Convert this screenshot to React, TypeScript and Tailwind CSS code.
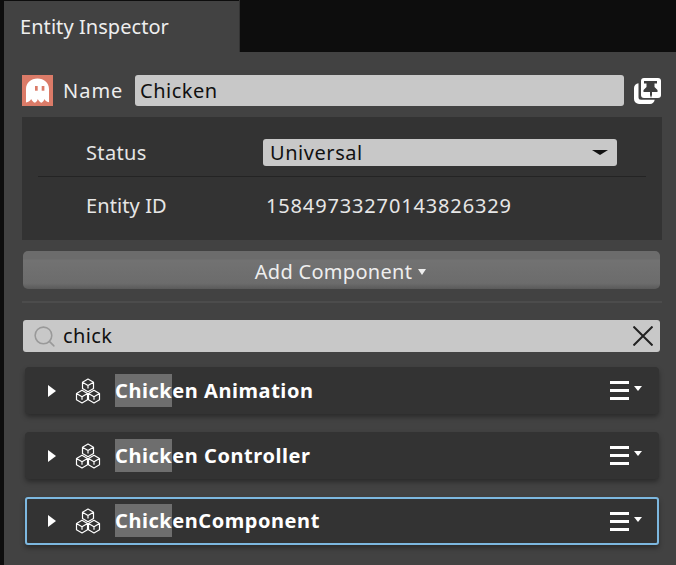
import { Search } from "lucide-react";

const font = { fontFamily: '"Noto Sans", sans-serif' };

function GhostIcon() {
  return (
    <div className="flex h-[31px] w-[31px] shrink-0 bg-[#db7b68]">
      <svg width="31" height="31" viewBox="0 0 31 31">
        <path
          d="M15.500 3.500C9 3.500 4 8 4 14v13.500c2.500-.5 4.200-1.700 5.200-3.400.8 1.800 2 3.300 3.800 3.600 1.400-.6 2.300-2 2.800-3.600.8 1.800 2 3.300 3.700 3.600 1.500-.6 2.400-2 2.900-3.600.6 1.500 2 2.900 4.600 3.100V14c0-6-5-10.500-11.500-10.500z"
          fill="#ffffff"
        />
        <rect x="13" y="11" width="2.700" height="4.700" fill="#db7b68" />
        <rect x="19.700" y="11" width="2.700" height="4.700" fill="#db7b68" />
      </svg>
    </div>
  );
}

function PinIcon() {
  return (
    <svg width="27" height="27" viewBox="0 0 27 27" className="shrink-0">
      <path
        d="M4.500 5.300C2 5.800 0 7.300 0 10v11a5 5 0 0 0 5 5h11c2.600 0 4.200-1.900 4.700-4.300H7a2.500 2.500 0 0 1-2.500-2.500z"
        fill="#ffffff"
      />
      <rect x="7" y="0" width="20" height="20" rx="3" fill="#ffffff" />
      <path d="M10 3h13v2.500h-2.500v3.500l3 3v2H18v3l-1 3-1-3v-3H9.500v-2l3-3V5.500H10z" fill="#3f3f3f" />
    </svg>
  );
}

function CubesIcon() {
  return (
    <svg width="26" height="26" viewBox="0 0 26 26" fill="none" stroke="#ffffff" strokeWidth="1.200" strokeLinejoin="round" className="shrink-0">
      <path d="M13 1l5.500 3.200v6.300L13 13.700l-5.500-3.200V4.200zM7.500 4.200L13 7.400l5.500-3.200M13 7.400v3" />
      <path d="M7 12.300l5.500 3.200v6.300L7 25l-5.500-3.200v-6.300zM1.500 15.500L7 18.700l5.500-3.200M7 18.700v3" />
      <path d="M19 12.300l5.500 3.200v6.300L19 25l-5.500-3.200v-6.300zM13.500 15.500l5.500 3.200 5.500-3.200M19 18.700v3" />
    </svg>
  );
}

function ComponentRow({ rest, selected }: { rest: string; selected?: boolean }) {
  return (
    <div
      className={
        selected
          ? "flex h-[48px] items-center rounded-[3px] border-2 border-[#7db8e0] bg-[#333333] pl-[21px] pr-[15px] shadow-[0_3px_5px_rgba(0,0,0,0.35)]"
          : "flex h-[47px] items-center rounded-[4px] bg-[#333333] pl-[23px] pr-[17px] shadow-[0_3px_5px_rgba(0,0,0,0.35)]"
      }
    >
      <span className="h-0 w-0 border-y-[6px] border-l-[8px] border-y-transparent border-l-white" />
      <span className="ml-[19px] mr-[14px]">
        <CubesIcon />
      </span>
      <span className="text-[20px] leading-none font-bold tracking-[0.55px] text-white">
        <span className="bg-[#6e6e6e] py-[3px]">Chick</span>
        {rest}
      </span>
      <div className="ml-auto flex items-start">
        <div className="flex w-[19px] flex-col gap-[5px]">
          <div className="h-[3px] bg-white" />
          <div className="h-[3px] bg-white" />
          <div className="h-[3px] bg-white" />
        </div>
        <span className="mt-[5px] ml-[5px] h-0 w-0 border-x-[4px] border-t-[5px] border-x-transparent border-t-white" />
      </div>
    </div>
  );
}

export default function App() {
  return (
    <div style={font} className="flex h-[565px] w-[676px] overflow-hidden bg-[#0d0d0d]">
      <div className="ml-[4px] flex w-[672px] flex-col">
        <div className="flex h-[52px] shrink-0">
          <div className="mt-[1px] flex w-[235px] items-center bg-[#424242] pl-[16px] text-[20px] tracking-[0.06px] text-[#eeeeee]">
            Entity Inspector
          </div>
          <div className="w-[1px] bg-[#333333]" />
        </div>

        <div className="flex flex-1 flex-col bg-[#424242] pl-[18px] pr-[14px] pt-[23px]">
          <div className="flex h-[31px] items-center">
            <GhostIcon />
            <span className="ml-[10px] w-[72px] pt-[1px] text-[20px] tracking-[1px] text-[#eeeeee]">Name</span>
            <div className="flex h-[31px] w-[489px] items-center rounded-[3px] bg-[#c8c8c8] pl-[5px] pt-[1px] text-[20px] tracking-[0.5px] text-[#111111]">
              Chicken
            </div>
            <span className="ml-[10px] mt-[2px] flex">
              <PinIcon />
            </span>
          </div>

          <div className="mt-[11px] flex h-[123px] flex-col bg-[#333333] px-[16px]">
            <div className="flex h-[60px] items-start border-b border-[#242424] pl-[48px] pt-[22px]">
              <span className="w-[177px] text-[20px] leading-[27px] tracking-[0.35px] text-[#e6e6e6]">Status</span>
              <div className="flex h-[27px] w-[354px] items-center justify-between rounded-[3px] bg-[#c8c8c8] pl-[7px] pr-[9px] text-[20px] tracking-[0.55px] text-[#111111]">
                Universal
                <span className="h-0 w-0 border-x-[8px] border-t-[5px] border-x-transparent border-t-[#111111]" />
              </div>
            </div>
            <div className="flex h-[56px] items-center pl-[48px] pt-[2px]">
              <span className="w-[180px] text-[20px] tracking-[0.1px] text-[#e6e6e6]">Entity ID</span>
              <span className="text-[20px] tracking-[0.85px] text-[#e6e6e6]">15849733270143826329</span>
            </div>
          </div>

          <button className="mt-[11px] ml-[1px] flex h-[38px] w-[637px] items-center justify-center gap-[6px] rounded-[5px] bg-[linear-gradient(#6c6c6c_0%,#6c6c6c_20%,#727272_25%,#6c6c6c_85%,#5a5a5a_100%)] pr-[2px] pt-[3px] text-[20px] tracking-[0.3px] text-[#eeeeee]">
            Add Component
            <span className="h-0 w-0 border-x-[4px] border-t-[6px] border-x-transparent border-t-[#eeeeee]" />
          </button>

          <div className="mt-[12px] h-[2px] w-[640px] bg-[#4c4c4c]" />

          <div className="mt-[17px] ml-[1px] flex h-[32px] w-[637px] items-center rounded-[3px] bg-[#c8c8c8] pl-[9px] pr-[7px] text-[20px] tracking-[0.4px] text-[#111111]">
            <Search size={25} strokeWidth={1.500} className="text-[#999999]" />
            <span className="ml-[6px]">chick</span>
            <svg width="20" height="20" viewBox="0 0 20 20" className="ml-auto" stroke="#222222" strokeWidth="2">
              <path d="M0.500 0.500l19 19M19.500 0.500l-19 19" />
            </svg>
          </div>

          <div className="mt-[15px] ml-[3px] flex w-[634px] flex-col gap-[18px]">
            <ComponentRow rest="en Animation" />
            <ComponentRow rest="en Controller" />
            <ComponentRow rest="enComponent" selected />
          </div>
        </div>
      </div>
    </div>
  );
}
